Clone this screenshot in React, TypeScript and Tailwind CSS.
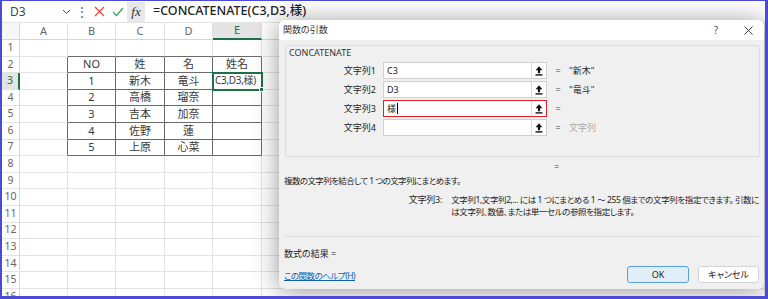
import React from 'react';

const colW = ['w-[48px]', 'w-[48px]', 'w-[49px]', 'w-[48px]', 'w-[49px]', 'flex-1'];
const colNames = ['A', 'B', 'C', 'D', 'E', 'F'];

const data: Record<number, string[]> = {
  2: ['', 'NO', '姓', '名', '姓名'],
  3: ['', '1', '新木', '竜斗', ''],
  4: ['', '2', '高橋', '瑠奈', ''],
  5: ['', '3', '吉本', '加奈', ''],
  6: ['', '4', '佐野', '蓮', ''],
  7: ['', '5', '上原', '心菜', ''],
};

function RefIcon() {
  return (
    <svg width="8" height="10" viewBox="0 0 8 10">
      <path d="M4 0.3 L7.4 4.2 H5.1 V7.2 H2.9 V4.2 H0.6 Z" fill="#111" />
      <rect x="0.5" y="8.2" width="7" height="1.4" fill="#111" />
    </svg>
  );
}

function Cell({ r, c }: { r: number; c: number }) {
  const inTable = r >= 2 && r <= 7 && c >= 1 && c <= 4;
  const darkR = inTable || (r >= 2 && r <= 7 && c === 0);
  const darkB = inTable || (r === 1 && c >= 1 && c <= 4);
  const text = data[r]?.[c] ?? '';
  const selected = r === 3 && c === 4;
  return (
    <div
      className={`${colW[c]} h-full shrink-0 border-r border-b flex items-center justify-center whitespace-nowrap ${
        darkR ? 'border-r-[#6b6b6b]' : 'border-r-[#e3e3e3]'
      } ${darkB ? 'border-b-[#6b6b6b]' : 'border-b-[#e3e3e3]'} ${
        selected
          ? 'relative outline-2 -outline-offset-1 outline-[#1e7145] justify-start pl-[2px] text-[10px] tracking-[-0.3px]'
          : 'overflow-hidden'
      }`}
    >
      {selected ? 'C3,D3,様)' : text}
      {selected && <span className="absolute right-[-3px] bottom-[-3px] w-[5px] h-[5px] bg-[#1e7145] border border-white" />}
    </div>
  );
}

function Sheet() {
  const rows = Array.from({ length: 16 }, (_, i) => i + 1);
  return (
    <div className="flex flex-col font-['Noto_Sans','Noto_Sans_CJK_JP',sans-serif] text-[11px] text-[#3a3a3a]">
      {/* formula bar */}
      <div className="h-[22px] flex items-center bg-white border-b border-[#e6e6e6]">
        <div className="w-[73px] h-full flex items-center justify-between pl-[8px] pr-[4px] text-[12px] text-[#444]">
          <span>D3</span>
          <svg width="9" height="6" viewBox="0 0 9 6">
            <path d="M1 1 L4.5 4.5 L8 1" stroke="#555" strokeWidth="1" fill="none" />
          </svg>
        </div>
        <div className="w-[14px] text-center text-[#555] text-[12px] leading-none">⋮</div>
        <div className="w-[36px] flex items-center justify-around ml-[2px]">
          <svg width="11" height="11" viewBox="0 0 11 11">
            <path d="M1 1 L10 10 M10 1 L1 10" stroke="#e0484a" strokeWidth="1.3" />
          </svg>
          <svg width="12" height="10" viewBox="0 0 12 10">
            <path d="M1 5 L4.5 8.5 L11 1" stroke="#3aa55c" strokeWidth="1.3" fill="none" />
          </svg>
        </div>
        <div className="w-[18px] h-[20px] bg-[#e8e8e8] flex items-center justify-center italic font-['Liberation_Serif',serif] text-[13px] text-[#333]">
          fx
        </div>
        <div className="flex-1 h-full ml-[2px] pl-[6px] flex items-center bg-white text-[12.5px] font-medium text-[#222] whitespace-nowrap">
          =CONCATENATE(C3,D3,様)
        </div>
      </div>
      {/* column headers */}
      <div className="h-[17px] flex text-[#666]">
        <div className="w-[18px] h-full shrink-0 border-r border-b border-[#d6d6d6] bg-[#f7f7f7]" />
        {colNames.map((n, i) => (
          <div
            key={n}
            className={`${colW[i]} h-full shrink-0 flex items-center justify-center border-r border-[#e0e0e0] ${
              i === 4 ? 'bg-[#e4e4e4] border-b-2 border-b-[#1e7145] text-[#1e7145]' : 'bg-white border-b border-b-[#d6d6d6]'
            }`}
          >
            {n}
          </div>
        ))}
      </div>
      {rows.map((r) => (
        <div key={r} className="h-[16.6px] flex">
          <div
            className={`w-[18px] h-full shrink-0 flex items-center justify-center border-b border-[#e3e3e3] text-[10.5px] ${
              r === 3 ? 'bg-[#e4e4e4] border-r-2 border-r-[#1e7145] text-[#1e7145]' : 'bg-white border-r border-r-[#d6d6d6] text-[#666]'
            }`}
          >
            {r}
          </div>
          {colNames.map((_, c) => (
            <Cell key={c} r={r} c={c} />
          ))}
        </div>
      ))}
    </div>
  );
}

function ArgRow({ label, value, result, active, muted }: { label: string; value: string; result: string; active?: boolean; muted?: boolean }) {
  return (
    <div className="h-[19px] flex items-center">
      <div className="w-[90px] text-right">{label}</div>
      <div
        className={`ml-[7px] w-[164px] h-[17px] bg-white flex items-center ${
          active ? 'border-[1.5px] border-[#e5202e]' : 'border border-[#cfcfcf]'
        }`}
      >
        <span className="flex-1 pl-[3px] flex items-center">
          {value}
          {active && <span className="inline-block w-px h-[11px] bg-black ml-px" />}
        </span>
        <span className="w-[15px] h-full border-l border-[#dadada] flex items-center justify-center">
          <RefIcon />
        </span>
      </div>
      <span className="ml-[8px] w-[6px] text-center text-[#444]">=</span>
      <span className={`ml-[8px] ${muted ? 'text-[#a8a8a8]' : ''}`}>{result}</span>
    </div>
  );
}

function Dialog() {
  return (
    <div className="absolute left-[277px] top-[19px] w-[485px] h-[269px] rounded-[6px] bg-[#f0f0f0] shadow-[0_2px_26px_rgba(0,0,0,0.42)] flex flex-col font-['Noto_Sans','Noto_Sans_CJK_JP',sans-serif] text-[9px] text-[#222] [font-feature-settings:'palt'] overflow-hidden">
      {/* title bar */}
      <div className="h-[20px] bg-white flex items-center pl-[4px]">
        <span className="text-[#333]">関数の引数</span>
        <span className="ml-auto w-[32px] text-center text-[#555] text-[10px]">?</span>
        <span className="w-[32px] flex justify-center">
          <svg width="9" height="9" viewBox="0 0 9 9">
            <path d="M0.5 0.5 L8.5 8.5 M8.5 0.5 L0.5 8.5" stroke="#444" strokeWidth="1" />
          </svg>
        </span>
      </div>
      <div className="flex-1 flex flex-col px-[5px]">
        {/* group box */}
        <div className="mt-[5px] ml-[1px] mr-[-1px] h-[112px] border border-[#dcdcdc] rounded-[2px] flex flex-col">
          <div className="pl-[3px] pt-[1px] h-[13px] leading-[12px] text-[#333]">CONCATENATE</div>
          <div className="mt-[2px] flex flex-col">
            <ArgRow label="文字列1" value="C3" result={'"新木"'} />
            <ArgRow label="文字列2" value="D3" result={'"竜斗"'} />
            <ArgRow label="文字列3" value="様" result="" active />
            <ArgRow label="文字列4" value="" result="文字列" muted />
          </div>
        </div>
        <div className="mt-[4px] h-[12px] leading-[12px] pl-[270px] text-[#444]">=</div>
        <div className="mt-[2px] h-[12px] leading-[12px] text-[8.5px] tracking-[-0.6px]">
          複数の文字列を結合して 1 つの文字列にまとめます。
        </div>
        <div className="mt-[7px] flex leading-[12px]">
          <div className="w-[161px] text-right tracking-[-0.2px]">文字列3:</div>
          <div className="ml-[9px] whitespace-nowrap text-[8.5px] tracking-[-0.4px]">
            <div>文字列1,文字列2,... には 1 つにまとめる 1 ～ 255 個までの文字列を指定できます。 引数に</div>
            <div>は文字列、数値、または単一セルの参照を指定します。</div>
          </div>
        </div>
        <div className="mt-[18px] ml-[1px] border-t border-[#dedede]" />
        <div className="mt-[11px] h-[12px] leading-[12px]">数式の結果 =</div>
        <div className="mt-[6px] h-[17px] flex items-center">
          <span className="text-[#0a5fb4] underline pt-[4px] text-[8.5px] tracking-[-0.5px]">この関数のヘルプ(H)</span>
          <span className="ml-auto w-[62px] h-[17px] flex items-center justify-center bg-[#e1eef9] border border-[#5c9ed8] rounded-[3px]">
            OK
          </span>
          <span className="ml-[9px] w-[61px] h-[17px] flex items-center justify-center bg-white border border-[#d4d4d4] rounded-[3px]">
            キャンセル
          </span>
        </div>
      </div>
    </div>
  );
}

export default function App() {
  return (
    <div className="w-[768px] h-[299px] bg-white border-[#4a4ad4] border-l-2 border-r-[3px] border-t border-b-[3px] relative overflow-hidden">
      <Sheet />
      <Dialog />
    </div>
  );
}
